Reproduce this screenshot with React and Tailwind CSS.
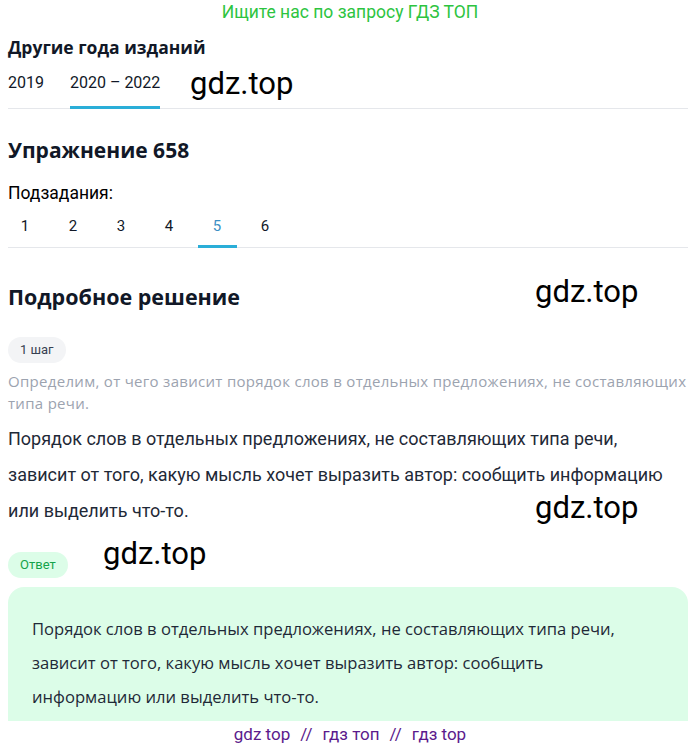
import React from "react";

const Mark = ({ className }) => (
  <span className={`absolute text-[31px] leading-none text-black font-['Roboto',sans-serif] ${className}`}>gdz.top</span>
);

const years = ["2019", "2020 – 2022"];
const subs = ["1", "2", "3", "4", "5", "6"];

export default function App() {
  return (
    <div className="relative w-[700px] h-[749px] overflow-hidden bg-white font-['Roboto',sans-serif] text-[#111827]">
      <div className="h-6 flex items-center justify-center text-[17.5px] text-[#2dc43f]">Ищите нас по запросу ГДЗ ТОП</div>

      <div className="pl-2 pr-3">
        <h2 className="mt-[11px] text-[17.5px] leading-6 font-bold font-['Open_Sans',sans-serif]">Другие года изданий</h2>
        <div className="mt-[14px] flex gap-[26px] border-b border-gray-200">
          {years.map((y, i) => (
            <div
              key={y}
              className={`-mb-px pb-[13px] text-[16px] leading-5 border-b-[3px] ${i === 1 ? "border-[#2aaed8]" : "border-transparent"}`}
            >
              {y}
            </div>
          ))}
        </div>

        <h1 className="mt-[27px] text-[21px] leading-7 font-bold font-['Open_Sans',sans-serif]">Упражнение 658</h1>
        <div className="mt-[18px] text-[17.5px] leading-[22px] text-black">Подзадания:</div>
        <div className="mt-3 border-b border-gray-200">
          <div className="-ml-[7px] flex">
            {subs.map((s) => (
              <div key={s} className="w-12 flex flex-col items-center -mb-px">
                <span className={`text-[15px] leading-5 ${s === "5" ? "text-[#3b8fc4]" : ""}`}>{s}</span>
                <span className={`mt-[9px] h-[3px] w-[39px] ${s === "5" ? "bg-[#2aaed8]" : ""}`} />
              </div>
            ))}
          </div>
        </div>

        <h2 className="mt-[35px] text-[21.5px] leading-7 font-bold font-['Open_Sans',sans-serif]">Подробное решение</h2>
        <div className="mt-[26px] inline-flex h-[26px] items-center rounded-full bg-[#f3f4f6] px-3 text-[13px] text-[#374151]">1 шаг</div>
        <p className="mt-[7px] text-[15px] tracking-[0.3px] leading-[22px] text-[#9ca3af] font-['Open_Sans',sans-serif]">
          Определим, от чего зависит порядок слов в отдельных предложениях, не составляющих типа речи.
        </p>
        <p className="mt-[7px] text-[18px] leading-9 text-[#1f2937]">
          Порядок слов в отдельных предложениях, не составляющих типа речи,
          <br />
          зависит от того, какую мысль хочет выразить автор: сообщить информацию
          <br />
          или выделить что-то.
        </p>
        <div className="mt-[23px] inline-flex h-[26px] items-center rounded-full bg-[#dcfde8] px-3 text-[13px] text-[#16a34a]">Ответ</div>
        <div className="mt-[9px] h-[134px] overflow-hidden rounded-t-2xl bg-[#dcfde8] pl-6 pr-8 pt-[25px]">
          <p className="text-[16.6px] leading-[34px] text-[#1f2937] font-['Open_Sans',sans-serif]">
            Порядок слов в отдельных предложениях, не составляющих типа речи, зависит от того, какую мысль хочет выразить автор: сообщить информацию или выделить что-то.
          </p>
        </div>
      </div>

      <div className="h-7 flex items-center justify-center gap-2.5 bg-white text-[17px] text-[#5b1a8c]">
        <span>gdz top</span><span>//</span><span>гдз топ</span><span>//</span><span>гдз top</span>
      </div>

      <Mark className="left-[190px] top-[68px]" />
      <Mark className="left-[535px] top-[276px]" />
      <Mark className="left-[535px] top-[492px]" />
      <Mark className="left-[103px] top-[538px]" />
    </div>
  );
}
